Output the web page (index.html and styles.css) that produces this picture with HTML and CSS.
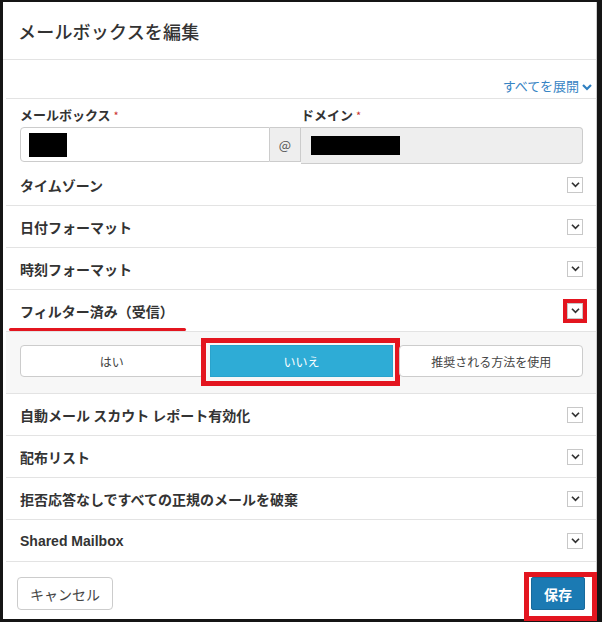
FILE: index.html
```html
<!DOCTYPE html>
<html lang="ja">
<head>
<meta charset="utf-8">
<link rel="stylesheet" href="styles.css">
</head>
<body>
<div class="frame">
  <div class="modal">
    <div class="header"><h1 class="title">メールボックスを編集</h1></div>
    <div class="content">
      <div class="expand-row"><a class="expand-link">すべてを展開 <svg class="exp-chev" viewBox="0 0 10 8" width="10" height="8"><path d="M1 2 L5 6 L9 2" fill="none" stroke="#2f7fc1" stroke-width="2.2"/></svg></a></div>
      <div class="fields">
        <div class="field mailbox">
          <div class="flabel">メールボックス <span class="req">*</span></div>
          <div class="inp-group">
            <div class="inp"><span class="mask mask1"></span></div>
            <div class="addon">@</div>
          </div>
        </div>
        <div class="field domain">
          <div class="flabel">ドメイン <span class="req">*</span></div>
          <div class="inp disabled"><span class="mask mask2"></span></div>
        </div>
      </div>
      <div class="row"><span class="rlabel">タイムゾーン</span><span class="chk"><svg viewBox="0 0 10 8" width="9" height="7"><path d="M1 2 L5 6 L9 2" fill="none" stroke="#333" stroke-width="2"/></svg></span></div>
      <div class="row"><span class="rlabel">日付フォーマット</span><span class="chk"><svg viewBox="0 0 10 8" width="9" height="7"><path d="M1 2 L5 6 L9 2" fill="none" stroke="#333" stroke-width="2"/></svg></span></div>
      <div class="row"><span class="rlabel">時刻フォーマット</span><span class="chk"><svg viewBox="0 0 10 8" width="9" height="7"><path d="M1 2 L5 6 L9 2" fill="none" stroke="#333" stroke-width="2"/></svg></span></div>
      <div class="row open"><span class="rlabel underlined">フィルター済み（受信）</span><span class="chk marked"><svg viewBox="0 0 10 8" width="9" height="7"><path d="M1 2 L5 6 L9 2" fill="none" stroke="#333" stroke-width="2"/></svg></span></div>
      <div class="options">
        <div class="btn-group">
          <button class="opt">はい</button>
          <button class="opt active">いいえ</button>
          <button class="opt">推奨される方法を使用</button>
        </div>
      </div>
      <div class="row"><span class="rlabel">自動メール スカウト レポート有効化</span><span class="chk"><svg viewBox="0 0 10 8" width="9" height="7"><path d="M1 2 L5 6 L9 2" fill="none" stroke="#333" stroke-width="2"/></svg></span></div>
      <div class="row"><span class="rlabel">配布リスト</span><span class="chk"><svg viewBox="0 0 10 8" width="9" height="7"><path d="M1 2 L5 6 L9 2" fill="none" stroke="#333" stroke-width="2"/></svg></span></div>
      <div class="row"><span class="rlabel">拒否応答なしですべての正規のメールを破棄</span><span class="chk"><svg viewBox="0 0 10 8" width="9" height="7"><path d="M1 2 L5 6 L9 2" fill="none" stroke="#333" stroke-width="2"/></svg></span></div>
      <div class="row"><span class="rlabel latin">Shared Mailbox</span><span class="chk"><svg viewBox="0 0 10 8" width="9" height="7"><path d="M1 2 L5 6 L9 2" fill="none" stroke="#333" stroke-width="2"/></svg></span></div>
    </div>
    <div class="footer">
      <button class="btn cancel">キャンセル</button>
      <button class="btn save">保存</button>
    </div>
  </div>
</div>
</body>
</html>
```

FILE: styles.css
```css
* { box-sizing: border-box; }
html, body { margin: 0; padding: 0; }
body {
  width: 602px;
  height: 622px;
  background: #151515;
  font-family: "Noto Sans CJK JP", "Liberation Sans", sans-serif;
  color: #333;
  overflow: hidden;
}
.frame {
  width: 602px;
  height: 622px;
  padding: 2px 5px 3px 3px;
}
.modal {
  width: 100%;
  height: 100%;
  background: #fff;
  border-right: 1px solid #cfcfcf;
  display: flex;
  flex-direction: column;
}
.header {
  height: 58px;
  border-bottom: 1px solid #e3e3e3;
  padding: 0 0 0 15px;
  display: flex;
  align-items: center;
}
.title {
  margin: 0;
  font-size: 18px;
  font-weight: 500;
  color: #333;
  letter-spacing: 0.2px;
}
.content {
  padding: 0 0 0 3px;
  flex: 1;
  display: flex;
  flex-direction: column;
}
.expand-row {
  height: 39px;
  border-bottom: 1px solid #e3e3e3;
  display: flex;
  justify-content: flex-end;
  align-items: flex-end;
  padding: 0 4px 4px 0;
}
.expand-link {
  color: #3784c4;
  font-size: 13px;
  line-height: 16px;
  display: flex;
  align-items: center;
  gap: 3px;
}
.exp-chev { margin-top: 1px; }
.fields {
  display: flex;
  padding: 0 13px 0 14px;
  height: 65px;
}
.field { display: flex; flex-direction: column; }
.mailbox { width: 281px; }
.domain { flex: 1; }
.flabel {
  font-size: 13px;
  font-weight: 700;
  line-height: 16px;
  padding-top: 8px;
  height: 28px;
  color: #333;
}
.req { color: #c9302c; font-size: 11px; font-weight: 400; vertical-align: top; }
.inp-group { display: flex; height: 35px; }
.inp {
  height: 35px;
  border: 1px solid #ccc;
  border-radius: 4px 0 0 4px;
  background: #fff;
  flex: 1;
  display: flex;
  align-items: center;
}
.inp.disabled {
  background: #eee;
  border-left: none;
  border-radius: 0 4px 4px 0;
}
.addon {
  width: 31px;
  border: 1px solid #ccc;
  border-left: none;
  background: #eee;
  display: flex;
  align-items: center;
  justify-content: center;
  font-size: 13px;
  color: #555;
}
.mask { display: block; background: #000; }
.mask1 { width: 38px; height: 24px; margin-left: 8px; }
.mask2 { width: 89px; height: 19px; margin-left: 10px; }
.row {
  height: 42px;
  border-bottom: 1px solid #e3e3e3;
  display: flex;
  align-items: center;
  justify-content: space-between;
  padding: 0 13px 0 14px;
}
.rlabel {
  font-size: 14px;
  font-weight: 700;
  color: #333;
  position: relative;
}
.latin { font-family: "Liberation Sans", sans-serif; }
.underlined::after {
  content: "";
  position: absolute;
  left: -11px;
  right: -12px;
  bottom: -10px;
  height: 3px;
  border-radius: 2px;
  background: #e3151f;
}
.chk {
  width: 16px;
  height: 16px;
  border: 1px solid #c8c8c8;
  background: #fff;
  display: flex;
  align-items: center;
  justify-content: center;
  position: relative;
}
.chk.marked::after {
  content: "";
  position: absolute;
  inset: -5px;
  border: 4px solid #e3151f;
}
.options {
  height: 62px;
  background: #f7f7f7;
  border-bottom: 1px solid #e3e3e3;
  padding: 13px 13px 0 14px;
}
.btn-group { display: flex; gap: 6px; }
.opt {
  flex: 1;
  height: 32px;
  border: 1px solid #ccc;
  border-radius: 4px;
  background: #fff;
  font-family: inherit;
  font-size: 12px;
  color: #444;
  position: relative;
}
.opt.active {
  background: #2eacd6;
  border-color: #2aa3cc;
  color: #fff;
  border-radius: 0;
}
.opt.active::after {
  content: "";
  position: absolute;
  left: -10px;
  right: -8px;
  top: -8px;
  bottom: -10px;
  border: 5px solid #e3151f;
}
.footer {
  flex: 1;
  display: flex;
  justify-content: space-between;
  align-items: flex-start;
  padding: 15px 11px 0 14px;
}
.btn {
  font-family: inherit;
  height: 33px;
  border-radius: 4px;
  font-size: 14px;
  position: relative;
}
.cancel {
  width: 96px;
  background: #fff;
  border: 1px solid #ccc;
  color: #444;
}
.save {
  width: 54px;
  background: #1b7ab3;
  border: 1px solid #176a9c;
  color: #fff;
  font-weight: 700;
  border-radius: 2px;
}
.save::after {
  content: "";
  position: absolute;
  left: -8px;
  right: -13px;
  top: -6px;
  bottom: -12px;
  border: 5px solid #e3151f;
}
```
